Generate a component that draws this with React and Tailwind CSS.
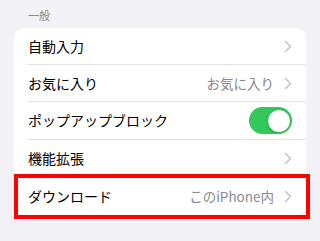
const font = { fontFamily: '"Noto Sans CJK JP", "Noto Sans", sans-serif' };

function Chevron() {
  return (
    <svg width="8" height="13" viewBox="0 0 8 13" className="ml-[10px] shrink-0">
      <path d="M1.5 1.5l5 5-5 5" fill="none" stroke="#c4c4c7" strokeWidth="1.6" strokeLinecap="round" strokeLinejoin="round" />
    </svg>
  );
}

function Toggle() {
  return (
    <div className="w-[43px] h-[27px] rounded-full bg-[#34c759] flex items-center justify-end pr-[1.5px]">
      <div className="w-[24px] h-[24px] rounded-full bg-white border border-[#2fb351] shadow-sm"></div>
    </div>
  );
}

function Row({ label, detail, toggle, height, last, highlight }) {
  return (
    <div className={`relative flex pl-[14px] ${height}`}>
      <div className={`flex-1 flex items-center pr-[14px] ${last ? '' : 'border-b border-[#e3e3e8]'}`}>
        <span className="flex-1 text-[14px] text-black">{label}</span>
        {detail && <span className="text-[13.5px] text-[#8a8a8e]">{detail}</span>}
        {toggle ? <Toggle /> : <Chevron />}
      </div>
      {highlight && (
        <div className="absolute -top-[3px] -bottom-[4px] left-0 -right-[4px] border-4 border-[#ff0000]"></div>
      )}
    </div>
  );
}

export default function App() {
  return (
    <div className="w-[320px] h-[241px] bg-[#f2f2f7] overflow-hidden" style={font}>
      <div className="pl-[28px] pt-[8px] h-[28px] text-[11px] leading-[15px] text-[#8a8a8e]">一般</div>
      <div className="mx-[14px] bg-white rounded-[10px]">
        <Row label="自動入力" height="h-[37px]" />
        <Row label="お気に入り" detail="お気に入り" height="h-[37px]" />
        <Row label="ポップアップブロック" toggle height="h-[38px]" />
        <Row label="機能拡張" height="h-[37px]" />
        <Row label="ダウンロード" detail="このiPhone内" height="h-[38px]" last highlight />
      </div>
    </div>
  );
}
